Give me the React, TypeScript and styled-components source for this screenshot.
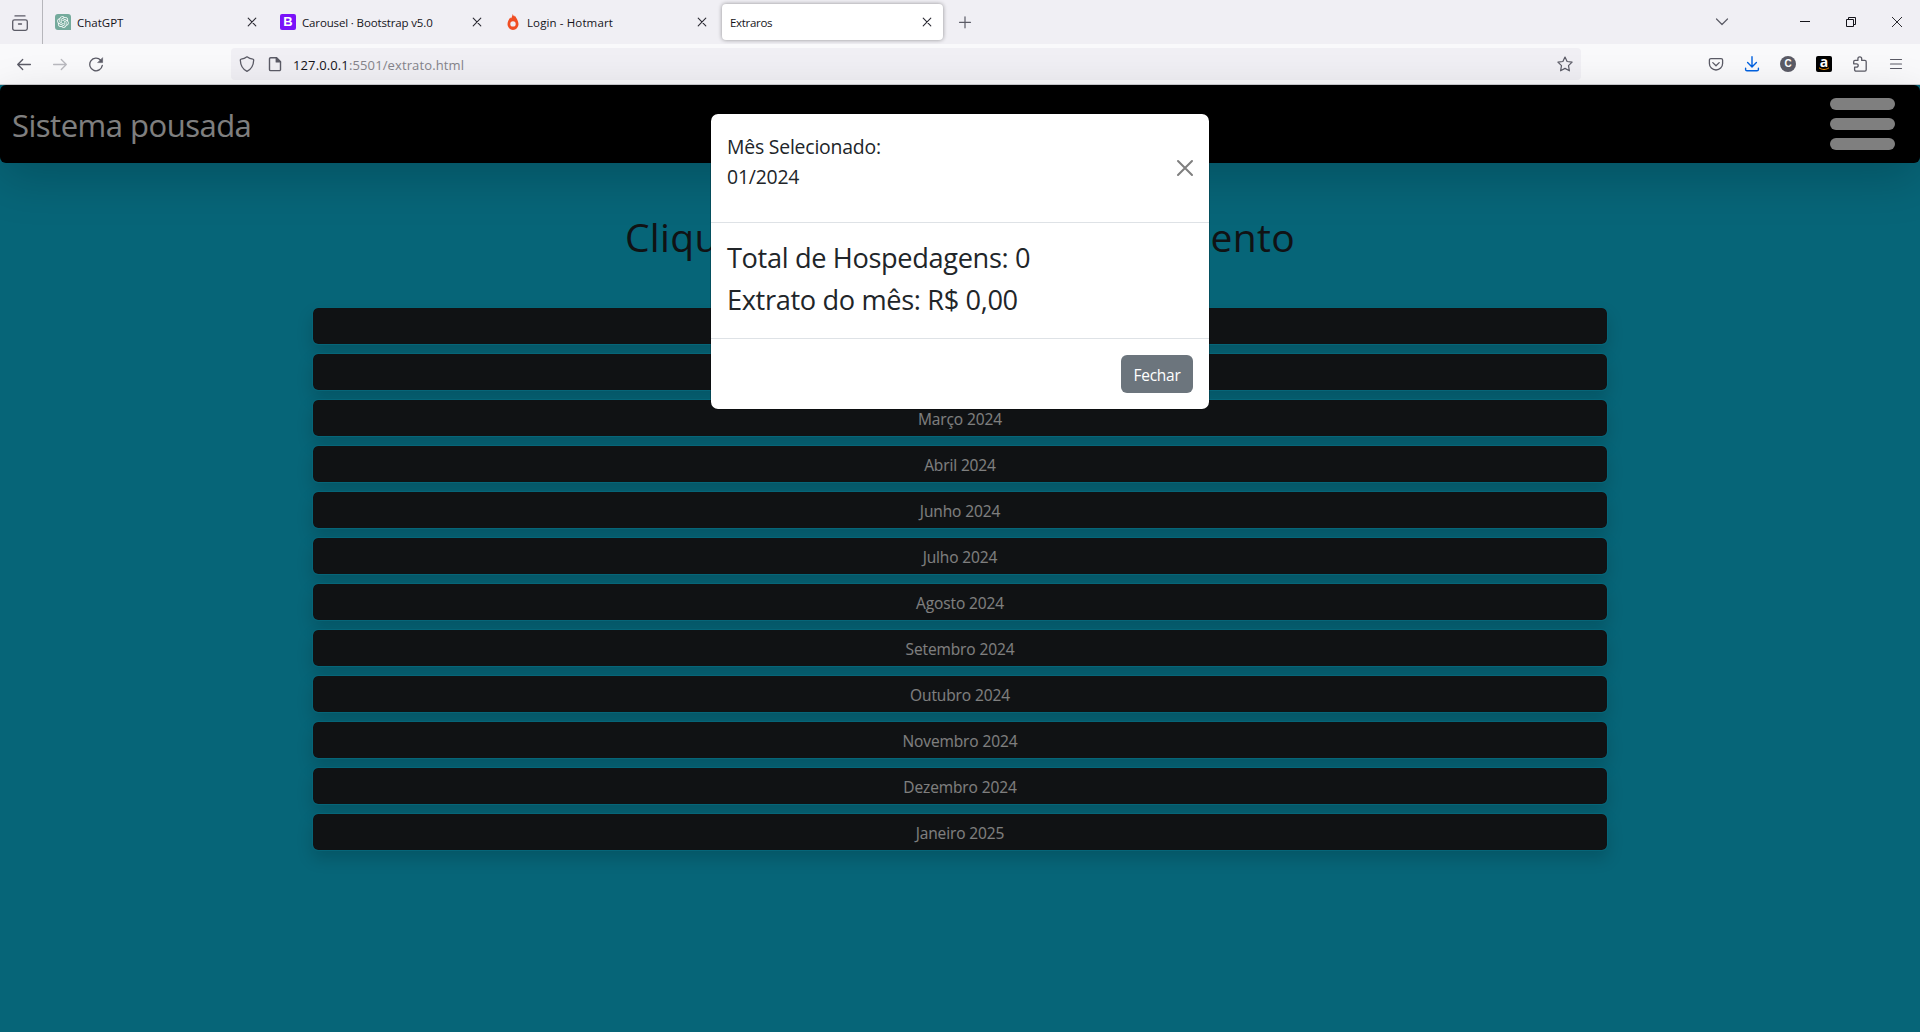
import React from "react";
import styled, { createGlobalStyle } from "styled-components";
import { RiOpenaiFill } from "react-icons/ri";

const Global = createGlobalStyle`
  *, *::before, *::after { box-sizing: border-box; }
  html, body { margin: 0; padding: 0; }
  body { overflow: hidden; font-family: "Open Sans", "Noto Sans", sans-serif; }
  button { font: inherit; letter-spacing: inherit; }
`;

const Window = styled.div`
  width: 1920px;
  height: 1032px;
  display: flex;
  flex-direction: column;
  overflow: hidden;
`;

/* ---------- browser chrome ---------- */

const TabStrip = styled.div`
  flex: none;
  height: 44px;
  display: flex;
  align-items: center;
  background: #f0eff4;
  color: #15141a;
`;

const TabsOverview = styled.div`
  width: 43px;
  height: 44px;
  padding: 14px 0 0 12px;
  border-right: 1px solid #b6b6bb;
  margin-right: 4px;
`;

const Tab = styled.div<{ $active?: boolean }>`
  width: 221px;
  height: 36px;
  margin-right: 4px;
  padding: 0 8px;
  display: flex;
  align-items: center;
  gap: 6px;
  border-radius: 4px;
  background: ${(p) => (p.$active ? "#fff" : "transparent")};
  box-shadow: ${(p) => (p.$active ? "0 0 4px rgba(0, 0, 0, 0.4)" : "none")};
  svg { flex: none; display: block; }
`;

const TabTitle = styled.span<{ $spacing: number }>`
  flex: 1;
  padding-top: 2px;
  font-size: 11.5px;
  line-height: 16px;
  white-space: nowrap;
  letter-spacing: ${(p) => p.$spacing}px;
`;

const TabClose = styled.span`
  width: 16px;
  height: 16px;
`;

const NewTab = styled.div`
  width: 36px;
  display: flex;
  justify-content: center;
`;

const Spacer = styled.div`
  flex: 1;
`;

const ListTabs = styled.div`
  width: 36px;
  margin-right: 42px;
  display: flex;
  justify-content: center;
`;

const WindowButton = styled.div`
  width: 46px;
  height: 44px;
  display: flex;
  align-items: center;
  justify-content: center;
`;

const Toolbar = styled.div`
  flex: none;
  height: 41px;
  padding: 0 6px;
  display: flex;
  align-items: center;
  background: #f9f9fb;
  border-bottom: 1px solid #ccccd0;
  color: #5b5b66;
`;

const ToolButton = styled.div<{ $dim?: boolean }>`
  flex: none;
  width: 36px;
  height: 32px;
  display: flex;
  align-items: center;
  justify-content: center;
  opacity: ${(p) => (p.$dim ? 0.4 : 1)};
  svg { display: block; }
`;

const AddressBar = styled.div`
  width: 1350px;
  height: 32px;
  margin: 0 117px;
  padding: 0 8px;
  display: flex;
  align-items: center;
  gap: 12px;
  border-radius: 4px;
  background: #f0eff4;
  svg { flex: none; display: block; }
`;

const Url = styled.span`
  flex: 1;
  margin-left: -2px;
  font-size: 13px;
  line-height: 20px;
  letter-spacing: 0.12px;
  padding-top: 1px;
  color: #85848b;
  b { font-weight: 400; color: #15141a; }
`;

/* ---------- page ---------- */

const Page = styled.main`
  position: relative;
  flex: 1;
  background: #0dcaf0;
  color: #212529;
`;

const Navbar = styled.nav`
  height: 78px;
  padding: 0 25px 0 12px;
  display: flex;
  align-items: center;
  justify-content: space-between;
  border-radius: 6px;
  background: #000;
  box-shadow: 0 16px 48px rgba(0, 0, 0, 0.175);
`;

const Brand = styled.span`
  padding-top: 1px;
  font-size: 31px;
  line-height: 48px;
  letter-spacing: -0.5px;
  color: #fff;
`;

const Burger = styled.div`
  display: flex;
  flex-direction: column;
  gap: 8px;
`;

const BurgerBar = styled.span`
  width: 65px;
  height: 12px;
  border-radius: 6px;
  background: #fff;
`;

const Heading = styled.h1`
  margin: 48px 0;
  padding-top: 2px;
  height: 48px;
  text-align: center;
  font-size: 39px;
  line-height: 48px;
  font-weight: 400;
  letter-spacing: 0.34px;
`;

const MonthList = styled.div`
  width: 1296px;
  margin: 0 auto;
  display: flex;
  flex-direction: column;
  gap: 8px;
`;

const MonthButton = styled.button`
  height: 38px;
  padding: 2px 0 0;
  border: 1px solid #0dcaf0;
  border-radius: 6px;
  background: #212529;
  background-clip: padding-box;
  color: #fff;
  font-size: 15.5px;
  line-height: 24px;
  letter-spacing: -0.12px;
  box-shadow: 0 8px 16px rgba(0, 0, 0, 0.15);
`;

/* ---------- modal ---------- */

const Backdrop = styled.div`
  position: absolute;
  inset: 0;
  padding-top: 28px;
  background: rgba(0, 0, 0, 0.5);
`;

const Dialog = styled.div`
  width: 500px;
  margin: 0 auto;
  border: 1px solid rgba(0, 0, 0, 0.2);
  border-radius: 8px;
  background: #fff;
  background-clip: padding-box;
`;

const DialogHeader = styled.div`
  height: 109px;
  padding: 16px;
  display: flex;
  align-items: center;
  justify-content: space-between;
  border-bottom: 1px solid #dee2e6;
  svg { margin-right: -4px; }
`;

const SelectedMonth = styled.p`
  margin: 0 0 16px;
  padding-top: 3px;
  font-size: 19.4px;
  line-height: 30px;
  letter-spacing: -0.2px;
`;

const DialogBody = styled.div`
  height: 115px;
  padding: 14px 16px 15px;
  font-size: 27.2px;
  line-height: 42px;
  letter-spacing: -0.36px;
`;

const DialogFooter = styled.div`
  height: 71px;
  padding: 0 16px;
  display: flex;
  align-items: center;
  justify-content: flex-end;
  border-top: 1px solid #dee2e6;
`;

const CloseButton = styled.button`
  width: 72px;
  height: 38px;
  padding: 2px 0 0;
  border: 0;
  border-radius: 6px;
  background: #6c757d;
  color: #fff;
  font-size: 15.5px;
  letter-spacing: -0.25px;
`;

/* ---------- icons ---------- */

const Cross = () => (
  <svg width="16" height="16" viewBox="0 0 16 16" fill="none" stroke="#2b2a33" strokeWidth="1.1" strokeLinecap="round">
    <path d="M4.200 4.200l7.600 7.600M11.800 4.200l-7.600 7.600" />
  </svg>
);

const ChatGptBox = styled.span`
  flex: none;
  width: 16px;
  height: 16px;
  display: flex;
  align-items: center;
  justify-content: center;
  border-radius: 3px 3px 0 3px;
  background: #74aa9c;
  color: #fff;
`;

const BootstrapBox = styled.span`
  flex: none;
  width: 16px;
  height: 16px;
  display: flex;
  align-items: center;
  justify-content: center;
  border-radius: 2px;
  background: #7a12f9;
  color: #fff;
  font: 700 13px/16px "Liberation Sans", Arial, sans-serif;
`;

const HotmartIcon = () => (
  <svg width="16" height="16" viewBox="0 0 16 16">
    <path
      fillRule="evenodd"
      fill="#f04e23"
      d="M7.6 0c.4 1 .9 1.7 1.6 2.5.3-.3.5-.7.6-1.100.9 1.700 3.700 4.700 3.700 8.800a5.500 5.800 0 0 1-11 0C2.500 7.500 4.100 5 5.400 3.500c.1.400.3.700.6 1C6.900 3.200 7.500 1.600 7.600 0zM8 7.200a2.700 2.700 0 1 0 0 5.400a2.700 2.700 0 0 0 0-5.400z"
    />
  </svg>
);

const OverviewIcon = () => (
  <svg width="16" height="16" viewBox="0 0 16 16" fill="none" stroke="#5b5b66" strokeWidth="1.3" strokeLinecap="round">
    <path d="M3 .9h10" />
    <rect x=".7" y="4.800" width="14.600" height="10.500" rx="1.800" />
    <path d="M6.500 9h3" />
  </svg>
);

const BackIcon = () => (
  <svg width="16" height="16" viewBox="0 0 16 16" fill="none" stroke="currentColor" strokeWidth="1.3" strokeLinecap="round" strokeLinejoin="round">
    <path d="M14.400 8.500H1.700M6.700 3.500L1.700 8.500l5 5" />
  </svg>
);

const ForwardIcon = () => (
  <svg width="16" height="16" viewBox="0 0 16 16" fill="none" stroke="currentColor" strokeWidth="1.3" strokeLinecap="round" strokeLinejoin="round">
    <path d="M1.600 8.500h12.700M9.300 3.500l5 5-5 5" />
  </svg>
);

const ReloadIcon = () => (
  <svg width="16" height="16" viewBox="0 0 16 16" fill="none" stroke="currentColor" strokeWidth="1.3" strokeLinecap="round" strokeLinejoin="round">
    <path d="M12.700 4.200A6.300 6.300 0 1 0 14.300 9.400" />
    <path d="M14.600 2v4.600H10z" fill="currentColor" strokeWidth=".6" />
  </svg>
);

const ShieldIcon = () => (
  <svg width="16" height="16" viewBox="0 0 16 16" fill="none" stroke="currentColor" strokeWidth="1.3" strokeLinejoin="round">
    <path d="M8 .8c1.900 1.500 3.900 2.200 5.900 2.400.5 0 .8.400.8.900C14.500 9.300 12.300 13.400 8 15.400 3.700 13.400 1.500 9.300 1.300 4.100c0-.5.300-.9.800-.9C4.100 3 6.100 2.300 8 .8z" />
  </svg>
);

const PageIcon = () => (
  <svg width="16" height="16" viewBox="0 0 16 16" fill="none" stroke="currentColor" strokeWidth="1.400" strokeLinejoin="round">
    <path d="M3.700 1.700h5.800l4 4v7.700a1.200 1.200 0 0 1-1.200 1.200H3.700a1.200 1.200 0 0 1-1.200-1.200V2.900a1.200 1.200 0 0 1 1.200-1.200z" />
    <path d="M9.300 1.700v4.200h4.200z" fill="currentColor" />
  </svg>
);

const StarIcon = () => (
  <svg width="16" height="16" viewBox="0 0 16 16" fill="none" stroke="currentColor" strokeWidth="1.2" strokeLinejoin="round">
    <path d="M8 1l2.100 4.500 5 .6-3.600 3.500.9 5.200L8 12.400l-4.400 2.400.9-5.200L.9 6.100l5-.6z" />
  </svg>
);

const PocketIcon = () => (
  <svg width="16" height="16" viewBox="0 0 16 16" fill="none" stroke="currentColor" strokeWidth="1.3" strokeLinecap="round" strokeLinejoin="round">
    <path d="M2.900 2.600h10.200a1.500 1.500 0 0 1 1.500 1.500V7.400a6.600 6.600 0 0 1-13.200 0V4.100a1.500 1.500 0 0 1 1.500-1.500z" />
    <path d="M4.800 6.600L8 9.700l3.200-3.100" />
  </svg>
);

const DownloadIcon = () => (
  <svg width="16" height="16" viewBox="0 0 16 16" fill="none" stroke="#0061e0" strokeWidth="1.4" strokeLinecap="round" strokeLinejoin="round">
    <path d="M8 .7v10M3.600 6.600L8 10.900l4.400-4.300M1.600 12.200v1.200c0 .8.600 1.400 1.400 1.400h10c.8 0 1.400-.6 1.400-1.400v-1.200" />
  </svg>
);

const AccountBadge = styled.span`
  width: 16px;
  height: 16px;
  display: flex;
  align-items: center;
  justify-content: center;
  border-radius: 50%;
  background: #5b5b66;
  color: #fff;
  font: 700 10px/16px "Liberation Sans", Arial, sans-serif;
`;

const AmazonBadge = styled.span`
  width: 16px;
  height: 16px;
  display: flex;
  flex-direction: column;
  align-items: center;
  border-radius: 2px;
  background: #000;
  color: #fff;
  font: 700 14px/11px "Open Sans", sans-serif;
`;

const PuzzleIcon = () => (
  <svg width="16" height="16" viewBox="0 0 16 16" fill="none" stroke="currentColor" strokeWidth="1.3" strokeLinejoin="round">
    <path d="M5.900 4.400V2.700a1.900 1.900 0 0 1 3.800 0v1.700h3.200a1.300 1.300 0 0 1 1.300 1.300v8.100a1.300 1.300 0 0 1-1.300 1.300H3.900a1.300 1.300 0 0 1-1.300-1.300v-2.600h1.900a1.700 1.700 0 0 0 0-3.400H1.700V5.700a1.300 1.300 0 0 1 1.300-1.300z" />
  </svg>
);

const MenuIcon = () => (
  <svg width="16" height="16" viewBox="0 0 16 16" fill="none" stroke="currentColor" strokeWidth="1.200" strokeLinecap="round">
    <path d="M2.500 3.500h11M2.500 8h11M2.500 12.500h11" />
  </svg>
);

const months = [
  "Janeiro 2024", "Fevereiro 2024", "Março 2024", "Abril 2024", "Junho 2024", "Julho 2024",
  "Agosto 2024", "Setembro 2024", "Outubro 2024", "Novembro 2024", "Dezembro 2024", "Janeiro 2025",
];

const tabs = [
  { title: "ChatGPT", icon: <ChatGptBox><RiOpenaiFill size={14} /></ChatGptBox>, spacing: 0 },
  { title: "Carousel · Bootstrap v5.0", icon: <BootstrapBox>B</BootstrapBox>, spacing: -0.14 },
  { title: "Login - Hotmart", icon: <HotmartIcon />, spacing: 0.12 },
  { title: "Extraros", icon: null, spacing: -0.3, active: true },
];

export default function App() {
  return (
    <Window>
      <Global />
      <TabStrip>
        <TabsOverview><OverviewIcon /></TabsOverview>
        {tabs.map((t) => (
          <Tab key={t.title} $active={t.active}>
            {t.icon}
            <TabTitle $spacing={t.spacing}>{t.title}</TabTitle>
            <TabClose><Cross /></TabClose>
          </Tab>
        ))}
        <NewTab>
          <svg width="16" height="16" viewBox="0 0 16 16" fill="none" stroke="#5b5b66" strokeWidth="1.2" strokeLinecap="round">
            <path d="M8 2.800v11M2.500 8.300h11" />
          </svg>
        </NewTab>
        <Spacer />
        <ListTabs>
          <svg width="16" height="16" viewBox="0 0 16 16" fill="none" stroke="#5b5b66" strokeWidth="1.2" strokeLinecap="round" strokeLinejoin="round">
            <path d="M2.500 5L8 10.500 13.500 5" />
          </svg>
        </ListTabs>
        <WindowButton>
          <svg width="10" height="10" viewBox="0 0 10 10"><path d="M0 4.500h10" stroke="#15141a" /></svg>
        </WindowButton>
        <WindowButton>
          <svg width="10" height="10" viewBox="0 0 10 10" fill="none" stroke="#15141a">
            <path d="M.5 2.500h7v7h-7zM2.500 2.500v-2h7v7h-2" />
          </svg>
        </WindowButton>
        <WindowButton>
          <svg width="10" height="10" viewBox="0 0 10 10" stroke="#15141a" strokeWidth=".9"><path d="M0 0l10 10M10 0L0 10" /></svg>
        </WindowButton>
      </TabStrip>
      <Toolbar>
        <ToolButton><BackIcon /></ToolButton>
        <ToolButton $dim><ForwardIcon /></ToolButton>
        <ToolButton><ReloadIcon /></ToolButton>
        <AddressBar>
          <ShieldIcon />
          <PageIcon />
          <Url><b>127.0.0.1</b>:5501/extrato.html</Url>
          <StarIcon />
        </AddressBar>
        <ToolButton><PocketIcon /></ToolButton>
        <ToolButton><DownloadIcon /></ToolButton>
        <ToolButton><AccountBadge>C</AccountBadge></ToolButton>
        <ToolButton>
          <AmazonBadge>
            a
            <svg width="12" height="4" viewBox="0 0 12 4" fill="none" stroke="#f90" strokeWidth="1"><path d="M1 .8c3 2.200 7 2.200 10 0" /></svg>
          </AmazonBadge>
        </ToolButton>
        <ToolButton><PuzzleIcon /></ToolButton>
        <ToolButton><MenuIcon /></ToolButton>
      </Toolbar>
      <Page>
        <Navbar>
          <Brand>Sistema pousada</Brand>
          <Burger><BurgerBar /><BurgerBar /><BurgerBar /></Burger>
        </Navbar>
        <Heading>Clique no mês para ver faturamento</Heading>
        <MonthList>
          {months.map((m) => <MonthButton key={m}>{m}</MonthButton>)}
        </MonthList>
        <Backdrop>
          <Dialog>
            <DialogHeader>
              <SelectedMonth>Mês Selecionado:<br />01/2024</SelectedMonth>
              <svg width="24" height="24" viewBox="0 0 24 24" stroke="#7f7f7f" strokeWidth="2" strokeLinecap="round">
                <path d="M5 5l14 14M19 5L5 19" />
              </svg>
            </DialogHeader>
            <DialogBody>
              Total de Hospedagens: 0<br />Extrato do mês: R$ 0,00
            </DialogBody>
            <DialogFooter><CloseButton>Fechar</CloseButton></DialogFooter>
          </Dialog>
        </Backdrop>
      </Page>
    </Window>
  );
}
